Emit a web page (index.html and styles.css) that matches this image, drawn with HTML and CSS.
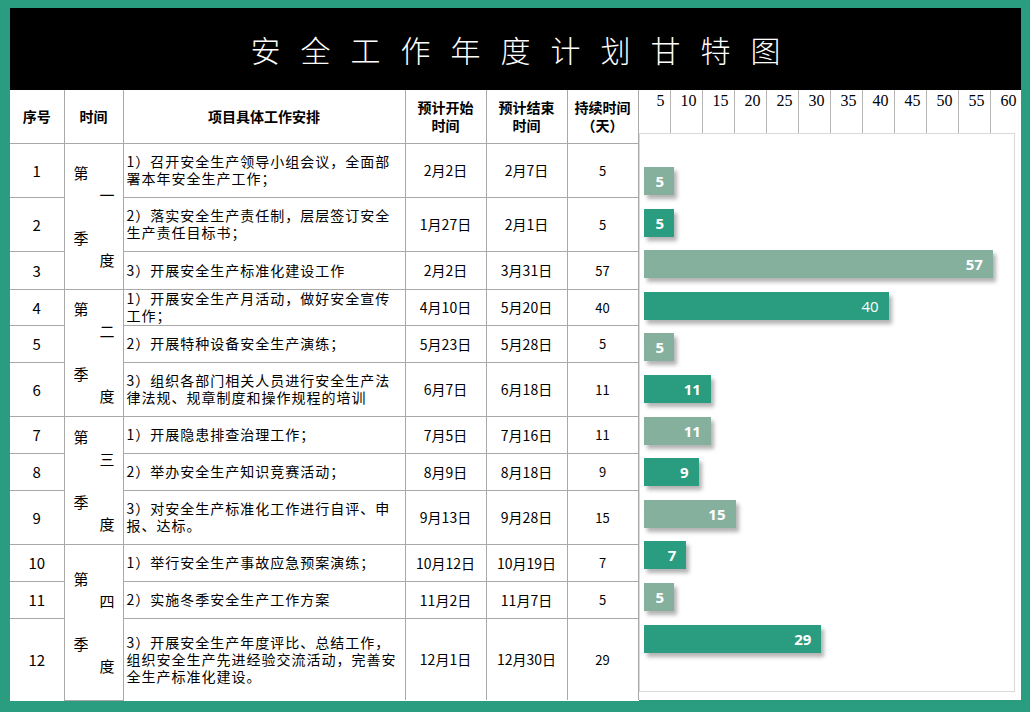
FILE: index.html
```html
<!DOCTYPE html>
<html lang="zh-CN">
<head>
<meta charset="utf-8">
<title>安全工作年度计划甘特图</title>
<link rel="stylesheet" href="styles.css">
</head>
<body>
<div class="frame">
  <header class="title">安全工作年度计划甘特图</header>
  <main class="content">
    <table class="plan">
      <colgroup>
        <col class="c-no"><col class="c-q"><col class="c-task"><col class="c-date"><col class="c-date"><col class="c-dur">
      </colgroup>
      <thead>
        <tr><th>序号</th><th>时间</th><th>项目具体工作安排</th><th>预计开始<br>时间</th><th>预计结束<br>时间</th><th>持续时间<br>（天）</th></tr>
      </thead>
      <tbody>
        <tr class="r54"><td class="no">1</td><td class="q" rowspan="3"><div class="qt"><span class="a">第</span><span class="b">一</span><span class="c">季</span><span class="d">度</span></div></td><td class="task">1）召开安全生产领导小组会议，全面部署本年安全生产工作；</td><td class="date">2月2日</td><td class="date">2月7日</td><td class="dur">5</td></tr>
        <tr class="r54"><td class="no">2</td><td class="task">2）落实安全生产责任制，层层签订安全生产责任目标书；</td><td class="date">1月27日</td><td class="date">2月1日</td><td class="dur">5</td></tr>
        <tr class="r38"><td class="no">3</td><td class="task">3）开展安全生产标准化建设工作</td><td class="date">2月2日</td><td class="date">3月31日</td><td class="dur">57</td></tr>
        <tr class="r36"><td class="no">4</td><td class="q" rowspan="3"><div class="qt"><span class="a">第</span><span class="b">二</span><span class="c">季</span><span class="d">度</span></div></td><td class="task">1）开展安全生产月活动，做好安全宣传工作；</td><td class="date">4月10日</td><td class="date">5月20日</td><td class="dur">40</td></tr>
        <tr class="r37"><td class="no">5</td><td class="task">2）开展特种设备安全生产演练；</td><td class="date">5月23日</td><td class="date">5月28日</td><td class="dur">5</td></tr>
        <tr class="r54"><td class="no">6</td><td class="task">3）组织各部门相关人员进行安全生产法律法规、规章制度和操作规程的培训</td><td class="date">6月7日</td><td class="date">6月18日</td><td class="dur">11</td></tr>
        <tr class="r37"><td class="no">7</td><td class="q" rowspan="3"><div class="qt"><span class="a">第</span><span class="b">三</span><span class="c">季</span><span class="d">度</span></div></td><td class="task">1）开展隐患排查治理工作；</td><td class="date">7月5日</td><td class="date">7月16日</td><td class="dur">11</td></tr>
        <tr class="r37"><td class="no">8</td><td class="task">2）举办安全生产知识竞赛活动；</td><td class="date">8月9日</td><td class="date">8月18日</td><td class="dur">9</td></tr>
        <tr class="r54"><td class="no">9</td><td class="task">3）对安全生产标准化工作进行自评、申报、达标。</td><td class="date">9月13日</td><td class="date">9月28日</td><td class="dur">15</td></tr>
        <tr class="r37"><td class="no">10</td><td class="q" rowspan="3"><div class="qt"><span class="a">第</span><span class="b">四</span><span class="c">季</span><span class="d">度</span></div></td><td class="task">1）举行安全生产事故应急预案演练；</td><td class="date">10月12日</td><td class="date">10月19日</td><td class="dur">7</td></tr>
        <tr class="r37"><td class="no">11</td><td class="task">2）实施冬季安全生产工作方案</td><td class="date">11月2日</td><td class="date">11月7日</td><td class="dur">5</td></tr>
        <tr class="r82"><td class="no">12</td><td class="task">3）开展安全生产年度评比、总结工作，组织安全生产先进经验交流活动，完善安全生产标准化建设。</td><td class="date">12月1日</td><td class="date">12月30日</td><td class="dur">29</td></tr>
      </tbody>
    </table>
    <section class="gantt">
      <div class="scale">
        <span>5</span><span>10</span><span>15</span><span>20</span><span>25</span><span>30</span><span>35</span><span>40</span><span>45</span><span>50</span><span>55</span><span>60</span>
      </div>
      <div class="chart">
        <div class="bars">
          <div class="bar light" style="width:30.6px"><span>5</span></div>
          <div class="bar dark" style="width:30.6px"><span>5</span></div>
          <div class="bar light" style="width:349.4px"><span>57</span></div>
          <div class="bar dark thin" style="width:245.2px"><span>40</span></div>
          <div class="bar light" style="width:30.6px"><span>5</span></div>
          <div class="bar dark" style="width:67.4px"><span>11</span></div>
          <div class="bar light" style="width:67.4px"><span>11</span></div>
          <div class="bar dark" style="width:55.2px"><span>9</span></div>
          <div class="bar light" style="width:92px"><span>15</span></div>
          <div class="bar dark" style="width:42.9px"><span>7</span></div>
          <div class="bar light" style="width:30.6px"><span>5</span></div>
          <div class="bar dark" style="width:177.8px"><span>29</span></div>
        </div>
      </div>
    </section>
  </main>
</div>
</body>
</html>
```

FILE: styles.css
```css
html, body {
  margin: 0;
  padding: 0;
}
body {
  background: #2a9d80;
  font-family: "Noto Sans CJK SC", "Noto Sans", sans-serif;
  color: #000;
}
.frame {
  width: 1011px;
  padding: 8px 9px 12px 10px;
}
.title {
  height: 82px;
  background: #000;
  color: #fff;
  font-size: 30px;
  font-weight: 300;
  letter-spacing: 20px;
  padding-left: 20px;
  display: flex;
  align-items: center;
  justify-content: center;
  box-sizing: border-box;
}
.content {
  display: flex;
  height: 610px;
  background: #fff;
}
.plan {
  width: 628px;
  height: 610px;
  border-collapse: collapse;
  table-layout: fixed;
  background: #fff;
  flex: none;
}
.c-no { width: 54px; }
.c-q { width: 59px; }
.c-task { width: 282px; }
.c-date { width: 81px; }
.c-dur { width: 71px; }
.plan th, .plan td {
  border: 1px solid #a9a9a9;
  padding: 0;
  text-align: center;
  vertical-align: middle;
}
.plan thead tr { height: 53px; }
.plan th {
  border-top: none;
  font-size: 14px;
  font-weight: 700;
  line-height: 18px;
}
.plan tr > :first-child { border-left: none; }
.plan tbody tr:last-child td { border-bottom: none; }
.r54 { height: 54px; }
.r38 { height: 38px; }
.r37 { height: 37px; }
.r36 { height: 36px; }
.r82 { height: 82px; }
.no {
  font-size: 15px;
}
.task {
  text-align: left !important;
  padding: 0 5px 0 3px !important;
  font-size: 14px;
  letter-spacing: 1px;
  line-height: 17px;
}
.date {
  font-size: 14px;
}
.dur {
  font-size: 13px;
}
.q {
  font-size: 15px;
}
.qt {
  display: grid;
  grid-template-columns: 1fr 1fr;
  grid-template-rows: 22px 22px 21px 22px 22px;
  padding: 0 8px 0 9px;
  line-height: 22px;
}
.qt .a { grid-column: 1; grid-row: 1; justify-self: start; }
.qt .b { grid-column: 2; grid-row: 2; justify-self: end; }
.qt .c { grid-column: 1; grid-row: 4; justify-self: start; }
.qt .d { grid-column: 2; grid-row: 5; justify-self: end; }

.gantt {
  width: 383px;
  flex: none;
  display: flex;
  flex-direction: column;
  overflow: hidden;
}
.scale {
  height: 43px;
  display: grid;
  grid-template-columns: repeat(12, 32px);
  flex: none;
}
.scale span {
  border-right: 1px solid #b5b5b5;
  font-family: "Liberation Serif", "DejaVu Serif", serif;
  font-size: 16px;
  text-align: right;
  padding: 2px 5px 0 0;
  line-height: 18px;
}
.chart {
  width: 376px;
  height: 559px;
  box-sizing: border-box;
  border: 1px solid #d9d9d9;
  background: #fff;
}
.bars {
  display: flex;
  flex-direction: column;
  gap: 13.6px;
  padding: 33px 0 0 4px;
}
.bar {
  height: 28px;
  flex: none;
  box-sizing: border-box;
  display: flex;
  align-items: center;
  justify-content: flex-end;
  padding-right: 10px;
  box-shadow: 3px 4px 4px rgba(0, 0, 0, 0.3);
  color: #fff;
  font-family: "Open Sans", "Liberation Sans", sans-serif;
  font-size: 15px;
  font-weight: 700;
}
.bar.light { background: #86b09e; }
.bar.dark { background: #2a9d80; }
.bar.thin { font-weight: 400; }
```
